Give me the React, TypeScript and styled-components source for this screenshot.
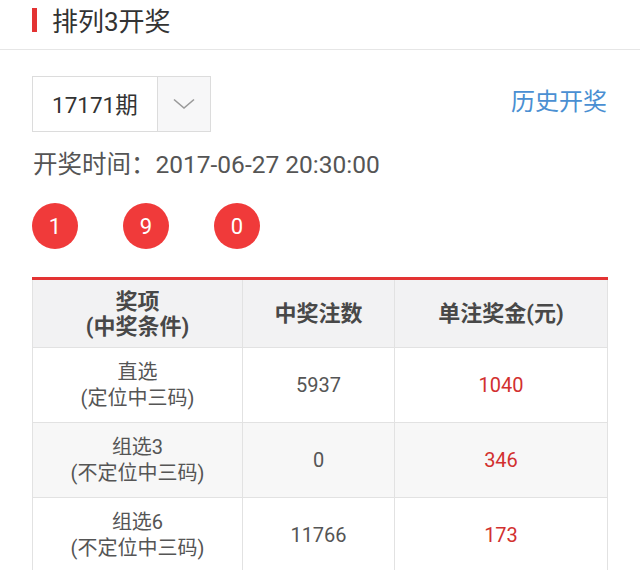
import styled, { createGlobalStyle } from 'styled-components';

const GlobalStyle = createGlobalStyle`
  * {
    box-sizing: border-box;
  }
  body {
    margin: 0;
    background: #ffffff;
    font-family: Roboto, "Noto Sans CJK SC", sans-serif;
    color: #333333;
  }
`;

const Page = styled.main`
  width: 640px;
  height: 570px;
  overflow: hidden;
`;

const Header = styled.header`
  display: flex;
  align-items: center;
  gap: 15px;
  height: 50px;
  padding: 0 0 10px 32px;
  border-bottom: 1px solid #e6e6e6;
`;

const Marker = styled.span`
  width: 5px;
  height: 24px;
  background-color: #e33333;
`;

const Title = styled.h1`
  margin: 0;
  font-size: 26px;
  font-weight: 400;
  color: #333333;
`;

const Body = styled.section`
  padding: 26px 33px 0 32px;
`;

const TopRow = styled.div`
  display: flex;
  justify-content: space-between;
  align-items: center;
`;

const Select = styled.div`
  display: flex;
  height: 56px;
  border: 1px solid #dcdcdc;
`;

const SelectValue = styled.div`
  display: flex;
  align-items: center;
  width: 124px;
  padding: 0 0 3px 19px;
  font-size: 22.5px;
  color: #333333;
`;

const SelectArrow = styled.div`
  display: flex;
  align-items: center;
  justify-content: center;
  width: 53px;
  border-left: 1px solid #dcdcdc;
  background-color: #f7f7f8;
`;

const HistoryLink = styled.a`
  font-size: 24px;
  color: #4a8fd2;
  text-decoration: none;
  margin-top: -10px;
`;

const DrawTime = styled.p`
  margin: 16px 0 0 1px;
  font-size: 24.5px;
  color: #555555;
  line-height: 33px;
`;

const Balls = styled.div`
  display: flex;
  gap: 45px;
  margin-top: 22px;
`;

const Ball = styled.span`
  display: flex;
  align-items: center;
  justify-content: center;
  width: 46px;
  height: 46px;
  border-radius: 50%;
  background-color: #f03a3a;
  color: #ffffff;
  font-size: 22px;
`;

const Table = styled.table`
  width: 575px;
  margin-top: 28px;
  border-collapse: collapse;
  border-top: 3px solid #e33333;
  table-layout: fixed;
`;

const HeadCell = styled.th<{ $width: number }>`
  width: ${(p) => p.$width}px;
  height: 69px;
  padding: 0;
  border: 1px solid #e2e2e2;
  border-top: none;
  background-color: #f2f2f3;
  font-size: 22px;
  font-weight: 700;
  line-height: 25px;
  color: #484848;
`;

const Row = styled.tr<{ $shaded?: boolean }>`
  background-color: ${(p) => (p.$shaded ? '#f7f7f7' : '#ffffff')};
`;

const Cell = styled.td<{ $accent?: boolean }>`
  height: 75px;
  padding: 0;
  border: 1px solid #e2e2e2;
  text-align: center;
  font-size: 20px;
  line-height: 26px;
  color: ${(p) => (p.$accent ? '#d2302f' : '#555555')};
`;

const prizes = [
  { name: '直选', rule: '(定位中三码)', count: '5937', amount: '1040' },
  { name: '组选3', rule: '(不定位中三码)', count: '0', amount: '346' },
  { name: '组选6', rule: '(不定位中三码)', count: '11766', amount: '173' },
];

function Chevron() {
  return (
    <svg width="22" height="12" viewBox="0 0 22 12">
      <path d="M1 1.5 L11 10 L21 1.5" fill="none" stroke="#9a9a9a" strokeWidth="1.6" />
    </svg>
  );
}

export default function App() {
  return (
    <Page>
      <GlobalStyle />
      <Header>
        <Marker />
        <Title>排列3开奖</Title>
      </Header>
      <Body>
        <TopRow>
          <Select>
            <SelectValue>17171期</SelectValue>
            <SelectArrow>
              <Chevron />
            </SelectArrow>
          </Select>
          <HistoryLink href="#history">历史开奖</HistoryLink>
        </TopRow>
        <DrawTime>开奖时间：2017-06-27 20:30:00</DrawTime>
        <Balls>
          {['1', '9', '0'].map((n, i) => (
            <Ball key={i}>{n}</Ball>
          ))}
        </Balls>
        <Table>
          <thead>
            <tr>
              <HeadCell $width={210}>
                奖项
                <br />
                (中奖条件)
              </HeadCell>
              <HeadCell $width={152}>中奖注数</HeadCell>
              <HeadCell $width={213}>单注奖金(元)</HeadCell>
            </tr>
          </thead>
          <tbody>
            {prizes.map((p, i) => (
              <Row key={p.name} $shaded={i % 2 === 1}>
                <Cell>
                  {p.name}
                  <br />
                  {p.rule}
                </Cell>
                <Cell>{p.count}</Cell>
                <Cell $accent>{p.amount}</Cell>
              </Row>
            ))}
          </tbody>
        </Table>
      </Body>
    </Page>
  );
}
